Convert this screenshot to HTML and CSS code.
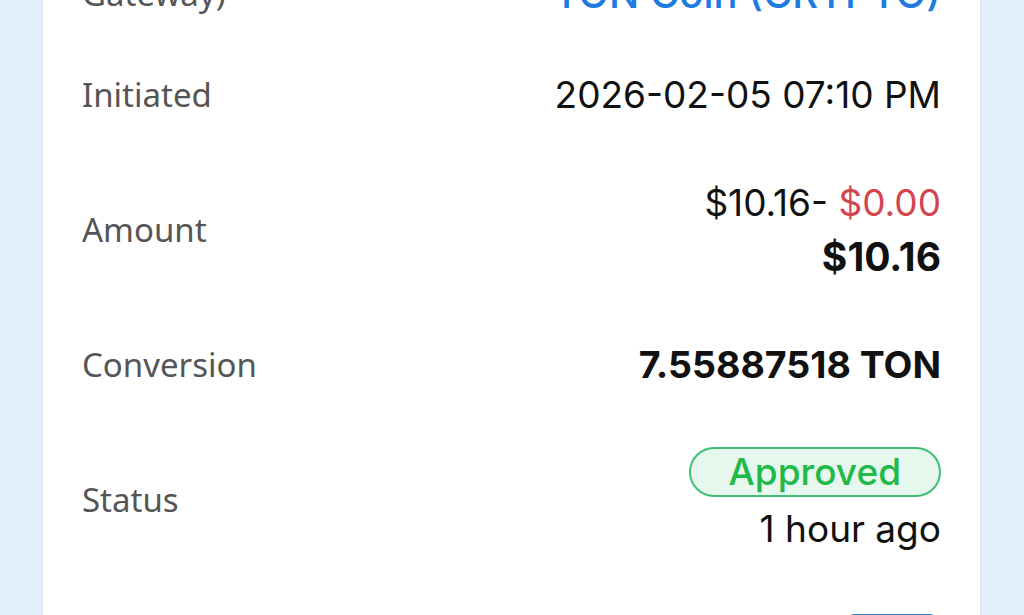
FILE: index.html
```html
<!DOCTYPE html>
<html lang="en">
<head>
<meta charset="utf-8">
<title>Transaction details</title>
<link rel="stylesheet" href="styles.css">
</head>
<body>
<main class="page">
  <section class="card">
    <div class="row row-first">
      <div class="label">Payment<br>Gateway)</div>
      <div class="value stack link">
        <span>Crypto</span>
        <span class="gateway">TON Coin (CRYPTO)</span>
      </div>
    </div>
    <div class="row">
      <div class="label">Initiated</div>
      <div class="value">2026-02-05 07:10 PM</div>
    </div>
    <div class="row">
      <div class="label">Amount</div>
      <div class="value stack">
        <span>$10.16- <span class="minus">$0.00</span></span>
        <strong class="total">$10.16</strong>
      </div>
    </div>
    <div class="row">
      <div class="label">Conversion</div>
      <div class="value"><strong>7.55887518 TON</strong></div>
    </div>
    <div class="row row-status">
      <div class="label">Status</div>
      <div class="value stack">
        <span class="badge">Approved</span>
        <span class="ago">1 hour ago</span>
      </div>
    </div>
    <div class="row">
      <div class="label">Proof</div>
      <div class="value"><span class="btn">View</span></div>
    </div>
  </section>
</main>
</body>
</html>
```

FILE: styles.css
```css
html, body {
  margin: 0;
  padding: 0;
  height: 100%;
  overflow: hidden;
  background: #e4f1fc;
}

.page {
  margin-top: -114px;
}

.card {
  margin: 0 44px 0 43px;
  padding: 0 39px;
  background: #ffffff;
  box-shadow: 0 0 2px rgba(0, 0, 0, 0.12);
}

.row {
  display: flex;
  justify-content: space-between;
  align-items: center;
  padding: 27px 0;
}

.row-first {
  padding-bottom: 20px;
}

.row-status {
  padding-top: 28px;
  padding-bottom: 28px;
}

.label {
  font-family: "Noto Sans", "Open Sans", sans-serif;
  font-size: 33px;
  line-height: 54px;
  color: #555555;
}

.value {
  font-family: "Inter", "Lato", sans-serif;
  font-size: 37px;
  line-height: 54px;
  color: #111111;
  text-align: right;
}

.gateway {
  font-size: 40px;
  font-weight: 500;
}

.value strong {
  font-weight: 700;
  font-size: 37.5px;
}

.value strong.total {
  font-size: 39px;
}

.link {
  color: #1e7be0;
}

.stack {
  display: flex;
  flex-direction: column;
  align-items: flex-end;
}

.minus {
  color: #d2454f;
}

.badge {
  box-sizing: border-box;
  height: 50px;
  line-height: 46px;
  padding: 0 38px;
  border: 2px solid #3fbf73;
  border-radius: 25px;
  background: #e6f7ee;
  color: #21b94a;
  font-weight: 500;
  margin-bottom: 8px;
}

.ago {
  line-height: 48px;
}

.btn {
  display: inline-block;
  box-sizing: border-box;
  width: 98px;
  height: 50px;
  line-height: 44px;
  border: 3px solid #2a86c9;
  border-radius: 12px;
  color: #2a86c9;
  text-align: center;
  font-size: 26px;
}
```
